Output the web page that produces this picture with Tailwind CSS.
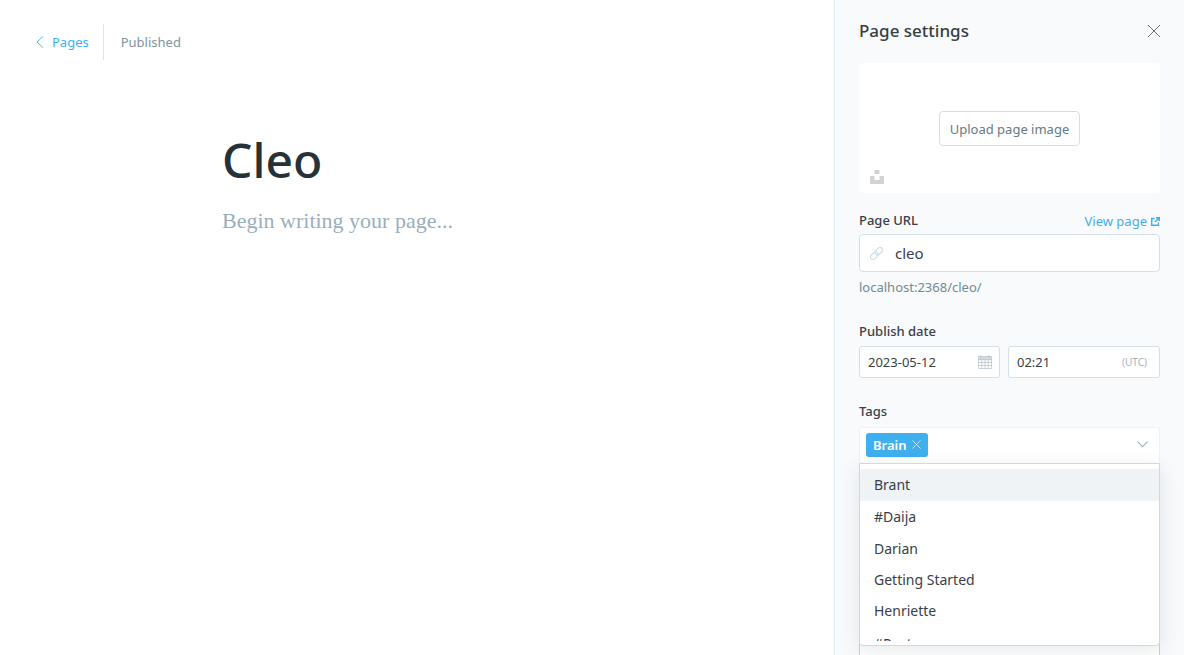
<!DOCTYPE html>
<html lang="en">
<head>
<meta charset="utf-8">
<meta name="viewport" content="width=device-width, initial-scale=1">
<title>Cleo</title>
<script src="https://cdn.jsdelivr.net/npm/@tailwindcss/browser@4"></script>
</head>
<body class="flex h-screen overflow-hidden bg-white font-['Segoe_UI','Noto_Sans',sans-serif] text-[13px] leading-5 text-[#394047]">
<main class="flex min-w-0 flex-1 flex-col">
  <header class="flex h-9 items-center mt-6 pl-9">
    <a href="#" class="flex items-center gap-2 text-[#3eb0ef]">
      <svg class="h-3 w-2" viewBox="0 0 8 12" fill="none" stroke="currentColor" stroke-width="0.9" aria-hidden="true"><path d="M7 0.5 1 6l6 5.5"/></svg>
      Pages
    </a>
    <span class="ml-[14px] h-9 w-px bg-[#dfe6eb]"></span>
    <span class="ml-[17px] text-[#7f949e]">Published</span>
  </header>
  <article class="pt-[68px] pl-[222px] pr-10">
    <h1 class="text-[48px] leading-[64px] font-medium text-[#263238]">Cleo</h1>
    <p class="mt-[13px] font-['Georgia','Liberation_Serif',serif] text-[22px] leading-8 text-[#9baebc]">Begin writing your page...</p>
  </article>
</main>

<aside class="w-[350px] shrink-0 overflow-hidden border-l border-[#dfe9f1] bg-[#f8fafc] pl-6 pr-6">
  <header class="flex h-[63px] items-center justify-between pb-[2px]">
    <h2 class="text-[17px] leading-6 font-medium text-[#343f44]">Page settings</h2>
    <button type="button" aria-label="Close" class="text-[#54666d]">
      <svg class="h-3 w-3" viewBox="0 0 12 12" fill="none" stroke="currentColor" stroke-width="0.9"><path d="M0 0l12 12M12 0 0 12"/></svg>
    </button>
  </header>

  <section class="relative flex h-[130px] items-center justify-center rounded bg-white">
    <button type="button" class="h-[35px] rounded border border-[#d3dfe5] px-[10px] pt-px text-[#667a84]">Upload page image</button>
    <button type="button" aria-label="Choose from Unsplash" class="absolute bottom-[9px] left-[11px] text-[#d3d3d3]">
      <svg class="h-[14px] w-[14px]" viewBox="0 0 14 14" fill="currentColor"><path d="M4.5 0h5v4h-5zM0 6h4.500v4h5V6H14v8H0z"/></svg>
    </button>
  </section>

  <form>
    <div class="mt-[17px] flex h-5 items-center justify-between">
      <label for="url" class="font-medium">Page URL</label>
      <a href="#" class="flex items-center gap-1 pt-[2px] text-[#3eb0ef]">View page
        <svg class="h-[9px] w-[9px]" viewBox="0 0 9 9" fill="none" stroke="currentColor" stroke-width="1.4" aria-hidden="true"><path d="M3.500 1.500H.7v6.800h6.800V5.500M5 .7h3.300V4M8.300.7 4 5"/></svg>
      </a>
    </div>
    <div class="mt-1 flex h-[38px] items-center rounded border border-[#d3e0e9] bg-white pl-[10px]">
      <svg class="h-[13px] w-[13px] shrink-0" viewBox="0 0 13 13" fill="none" stroke="#cfdfe9" stroke-width="1.200" aria-hidden="true"><g transform="rotate(-45 6.500 6.500)"><rect x="-1" y="4" width="8.500" height="5" rx="2.500"/><rect x="5.500" y="4" width="8.500" height="5" rx="2.500"/></g></svg>
      <input id="url" type="text" value="cleo" class="min-w-0 flex-1 bg-transparent px-3 text-[15px] outline-none">
    </div>
    <p class="mt-[5px] text-[#738a94]">localhost:2368/cleo/</p>

    <label for="date" class="mt-6 block font-medium">Publish date</label>
    <div class="mt-[5px] flex gap-2">
      <div class="flex h-8 w-[141px] items-center rounded-[3px] border border-[#d3e0e9] bg-white pr-[7px] pl-2">
        <input id="date" type="text" value="2023-05-12" class="min-w-0 flex-1 bg-transparent outline-none">
        <svg class="h-[14px] w-[14px] shrink-0" viewBox="0 0 14 14" fill="none" aria-hidden="true"><path fill="#d5dde1" d="M.5 1.500h13V5H.5z"/><path stroke="#b3c0c7" stroke-width="0.7" d="M.5 1.500h13v12H.5zM.5 4.700h13M3 0v3M11 0v3M.5 7.500h13M.5 10.500h13M3.800 5v8.500M7 5v8.500M10.200 5v8.500"/></svg>
      </div>
      <div class="flex h-8 min-w-0 flex-1 items-center rounded-[3px] border border-[#d3e0e9] bg-white pr-3 pl-2">
        <input type="text" value="02:21" aria-label="Publish time" class="min-w-0 flex-1 bg-transparent outline-none">
        <span class="text-[10px] text-[#a3b2ba]">(UTC)</span>
      </div>
    </div>

    <label for="tags" class="mt-[23px] block font-medium">Tags</label>
    <div class="relative mt-[6px]">
      <div class="flex h-9 items-center rounded-t-[3px] border-x border-t border-[#f0f3f6] bg-white pr-[11px] pb-[2px] pl-[6px]">
        <span class="flex h-6 items-center gap-[5px] rounded-[3px] bg-[#3eb0ef] px-[7px] font-semibold text-white">Brain
          <button type="button" aria-label="Remove Brain"><svg class="h-[9px] w-[9px]" viewBox="0 0 10 10" fill="none" stroke="#cdeafb" stroke-width="1"><path d="M.5.5l9 9M9.500.5l-9 9"/></svg></button>
        </span>
        <input id="tags" type="text" class="min-w-0 flex-1 bg-transparent px-2 outline-none">
        <svg class="h-[7px] w-[11px]" viewBox="0 0 11 7" fill="none" stroke="#9fb1bb" stroke-width="1.100" aria-hidden="true"><path d="M.5.7l5 5 5-5"/></svg>
      </div>
      <ul role="listbox" aria-label="Tags" class="absolute inset-x-0 top-9 h-[183px] overflow-hidden rounded-b border border-[#d3d8df] bg-white pt-[5px] text-[14px] shadow-[0_5px_20px_rgba(60,70,90,0.12)]">
        <li role="option" aria-selected="true" class="bg-[#eff3f6] px-[14px] py-[6px]">Brant</li>
        <li role="option" class="px-[14px] py-[6px]">#Daija</li>
        <li role="option" class="px-[14px] py-[6px]">Darian</li>
        <li role="option" class="px-[14px] py-[5px]">Getting Started</li>
        <li role="option" class="px-[14px] py-[6px]">Henriette</li>
        <li role="option" class="h-[14px] overflow-hidden px-[14px] pt-[7px]">#Post</li>
      </ul>
    </div>
    <div class="mt-[49px] h-9 rounded border border-[#c5d2df] bg-white"></div>
    <textarea aria-label="Excerpt" class="mt-[50px] block h-[110px] w-full resize-none rounded border border-[#c5d2df] bg-white"></textarea>
  </form>
</aside>
</body>
</html>
